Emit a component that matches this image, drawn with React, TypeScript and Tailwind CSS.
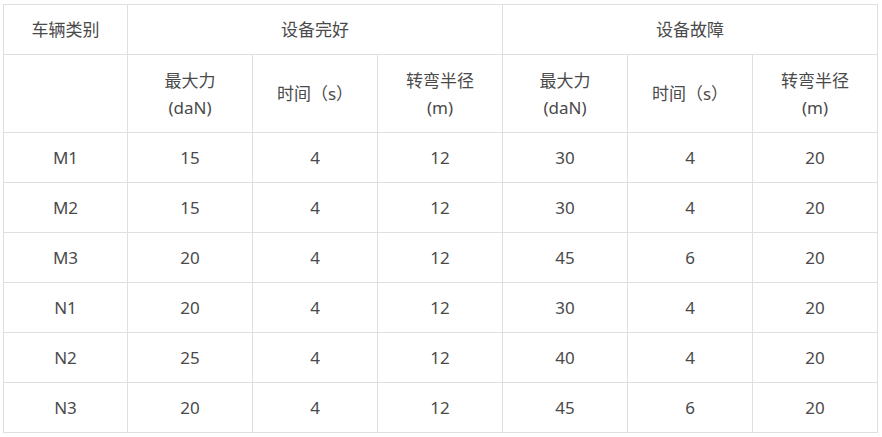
const cols = ['w-[124px]', 'w-[125px]', 'w-[125px]', 'w-[125px]', 'w-[125px]', 'w-[125px]', 'w-[125px]']

const rows = [
  ['M1', '15', '4', '12', '30', '4', '20'],
  ['M2', '15', '4', '12', '30', '4', '20'],
  ['M3', '20', '4', '12', '45', '6', '20'],
  ['N1', '20', '4', '12', '30', '4', '20'],
  ['N2', '25', '4', '12', '40', '4', '20'],
  ['N3', '20', '4', '12', '45', '6', '20'],
]

const sub = [
  ['最大力', '(daN)'],
  ['时间（s）'],
  ['转弯半径', '(m)'],
  ['最大力', '(daN)'],
  ['时间（s）'],
  ['转弯半径', '(m)'],
]

const cell = 'border border-[#dfdfdf] text-center align-middle p-0'

export default function App() {
  return (
    <div className="w-[882px] h-[437px] bg-white pt-[4px] pl-[3px] text-[#4a4a4a] text-[17px] leading-[27px] [font-family:'Noto_Sans','Noto_Sans_CJK_SC',sans-serif]">
      <table className="table-fixed border-collapse w-[875px]">
        <colgroup>
          {cols.map((c, i) => (
            <col key={i} className={c} />
          ))}
        </colgroup>
        <tbody>
          <tr className="h-[50px]">
            <td className={cell}>车辆类别</td>
            <td className={cell} colSpan={3}>设备完好</td>
            <td className={cell} colSpan={3}>设备故障</td>
          </tr>
          <tr className="h-[78px]">
            <td className={cell}></td>
            {sub.map((s, i) => (
              <td key={i} className={cell}>
                {s.map((line, j) => (
                  <div key={j}>{line}</div>
                ))}
              </td>
            ))}
          </tr>
          {rows.map((r) => (
            <tr key={r[0]} className="h-[50px]">
              {r.map((v, i) => (
                <td key={i} className={cell}>
                  {v}
                </td>
              ))}
            </tr>
          ))}
        </tbody>
      </table>
    </div>
  )
}
